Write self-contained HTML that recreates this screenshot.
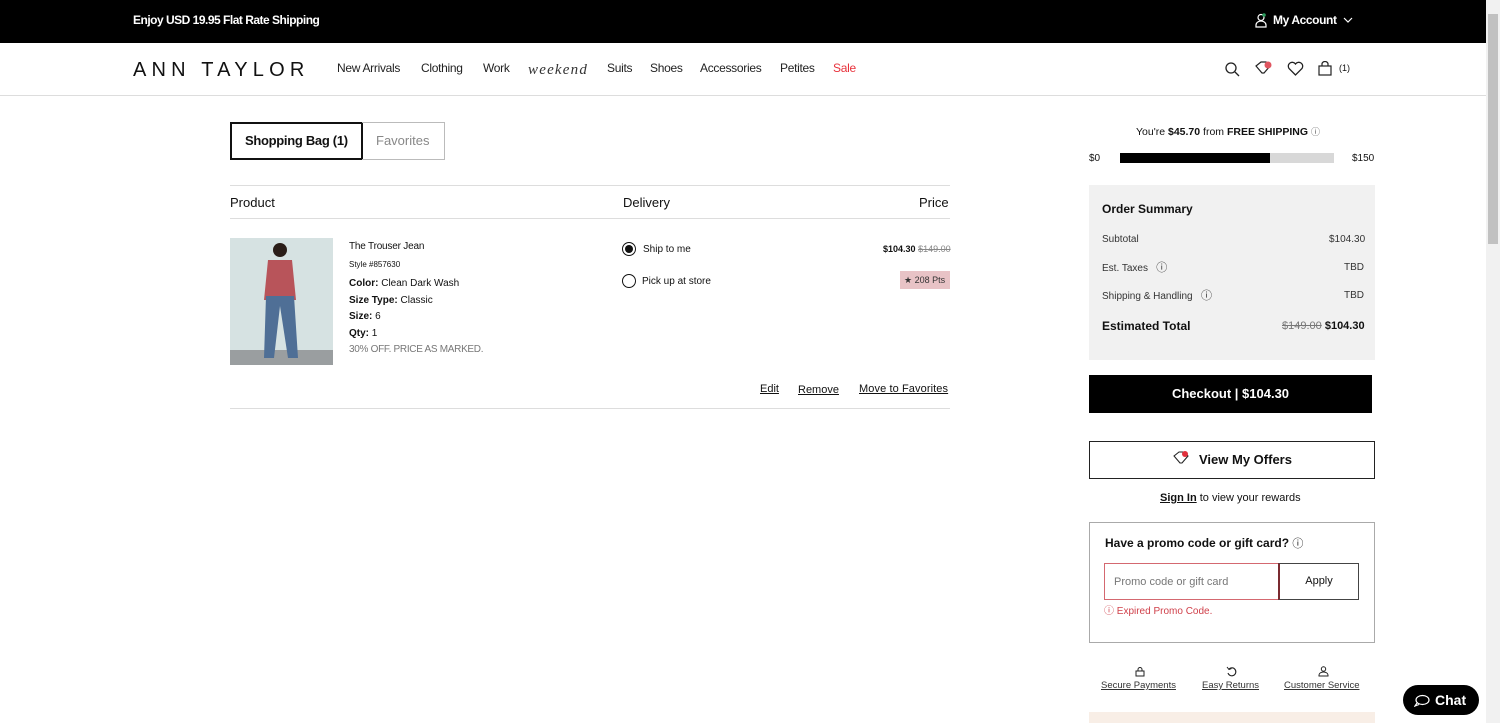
<!DOCTYPE html>
<html><head><meta charset="utf-8"><style>
*{margin:0;padding:0;box-sizing:border-box}
body{width:1500px;height:723px;overflow:hidden;background:#fff;font-family:"Liberation Sans",sans-serif;color:#111;position:relative}
.a{position:absolute;white-space:nowrap;line-height:1.15}
.top{left:0;top:0;width:1486px;height:43px;background:#000}
u{text-decoration:underline}
</style></head><body>
<div class="a top"></div>
<div class="a" style="left:133px;top:14px;color:#fff;font-size:12px;font-weight:bold;letter-spacing:-0.5px">Enjoy USD 19.95 Flat Rate Shipping</div>
<svg class="a" style="left:1255px;top:13px" width="13" height="15" viewBox="0 0 13 15"><circle cx="6" cy="4.5" r="3" fill="none" stroke="#fff" stroke-width="1.2"/><path d="M1 14v-2a5 4 0 0 1 10 0v2z" fill="none" stroke="#fff" stroke-width="1.2"/><circle cx="9" cy="2" r="1.8" fill="#2a9d5c"/></svg>
<div class="a" style="left:1273px;top:14px;color:#fff;font-size:12px;font-weight:bold;letter-spacing:-0.4px">My Account</div>
<svg class="a" style="left:1343px;top:17px" width="10" height="6"><path d="M1 1l4 4 4-4" fill="none" stroke="#fff" stroke-width="1.2"/></svg>
<div class="a" style="left:0;top:95px;width:1486px;height:1px;background:#ddd"></div>
<div class="a" style="left:133px;top:59px;font-size:20px;letter-spacing:5.2px;font-weight:normal">ANN TAYLOR</div>
<div class="a" style="left:337px;top:62px;font-size:12px;color:#222;letter-spacing:-0.3px">New Arrivals</div>
<div class="a" style="left:421px;top:62px;font-size:12px;color:#222;letter-spacing:-0.3px">Clothing</div>
<div class="a" style="left:483px;top:62px;font-size:12px;color:#222;letter-spacing:-0.3px">Work</div>
<div class="a" style="left:528px;top:62px;font-size:15px;font-family:'Liberation Serif',serif;font-style:italic;letter-spacing:1.2px;color:#333">weekend</div>
<div class="a" style="left:607px;top:62px;font-size:12px;color:#222;letter-spacing:-0.3px">Suits</div>
<div class="a" style="left:650px;top:62px;font-size:12px;color:#222;letter-spacing:-0.3px">Shoes</div>
<div class="a" style="left:700px;top:62px;font-size:12px;color:#222;letter-spacing:-0.3px">Accessories</div>
<div class="a" style="left:780px;top:62px;font-size:12px;color:#222;letter-spacing:-0.3px">Petites</div>
<div class="a" style="left:833px;top:62px;font-size:12px;color:#e8323c;letter-spacing:-0.3px">Sale</div>
<svg class="a" style="left:1225px;top:62px" width="15" height="15"><circle cx="6" cy="6" r="5" fill="none" stroke="#222" stroke-width="1.3"/><path d="M10 10l4 4" stroke="#222" stroke-width="1.3"/></svg>
<svg class="a" style="left:1254px;top:60px" width="20" height="17"><path d="M2 6l5-4h5l4 4-6 7-2 0z" fill="none" stroke="#222" stroke-width="1.2"/><circle cx="14" cy="5" r="3.5" fill="#e05560"/></svg>
<svg class="a" style="left:1287px;top:61px" width="17" height="15"><path d="M8.5 14L2 7.5A3.5 3.5 0 0 1 8.5 3a3.5 3.5 0 0 1 6.5 4.5z" fill="none" stroke="#222" stroke-width="1.3"/></svg>
<svg class="a" style="left:1318px;top:61px" width="14" height="15"><rect x="1" y="5" width="12" height="9" fill="none" stroke="#222" stroke-width="1.2"/><path d="M4 5V3a3 2.5 0 0 1 6 0v2" fill="none" stroke="#222" stroke-width="1.2"/></svg>
<div class="a" style="left:1339px;top:63px;font-size:9px">(1)</div>

<div class="a" style="left:230px;top:122px;width:133px;height:38px;border:2px solid #111"></div>
<div class="a" style="left:245px;top:134px;font-size:13px;font-weight:bold;color:#111;letter-spacing:-0.3px">Shopping Bag (1)</div>
<div class="a" style="left:362px;top:122px;width:83px;height:38px;border:1px solid #bbb;border-left:none"></div>
<div class="a" style="left:376px;top:134px;font-size:13px;color:#888">Favorites</div>
<div class="a" style="left:230px;top:185px;width:720px;height:1px;background:#ddd"></div>
<div class="a" style="left:230px;top:196px;font-size:13px">Product</div>
<div class="a" style="left:623px;top:196px;font-size:13px">Delivery</div>
<div class="a" style="left:919px;top:196px;font-size:13px">Price</div>
<div class="a" style="left:230px;top:218px;width:720px;height:1px;background:#ddd"></div>

<svg class="a" style="left:230px;top:238px" width="103" height="127"><rect width="103" height="127" fill="#d6e2e2"/><rect y="112" width="103" height="15" fill="#9a9ea0"/><circle cx="50" cy="12" r="7" fill="#2a1d18"/><path d="M38 22h24l4 40H34z" fill="#b8545a"/><path d="M36 58h28l4 62h-10l-8-52-6 52H34z" fill="#4f6f96"/></svg>
<div class="a" style="left:349px;top:241px;font-size:10px;letter-spacing:-0.2px">The Trouser Jean</div>
<div class="a" style="left:349px;top:260px;font-size:8px">Style #857630</div>
<div class="a" style="left:349px;top:278px;font-size:10px"><b>Color:</b> Clean Dark Wash</div>
<div class="a" style="left:349px;top:295px;font-size:10px"><b>Size Type:</b> Classic</div>
<div class="a" style="left:349px;top:311px;font-size:10px"><b>Size:</b> 6</div>
<div class="a" style="left:349px;top:328px;font-size:10px"><b>Qty:</b> 1</div>
<div class="a" style="left:349px;top:344px;font-size:10px;color:#777;letter-spacing:-0.3px">30% OFF. PRICE AS MARKED.</div>
<div class="a" style="left:622px;top:242px;width:14px;height:14px;border:1.3px solid #111;border-radius:50%"></div>
<div class="a" style="left:625px;top:245px;width:8px;height:8px;background:#111;border-radius:50%"></div>
<div class="a" style="left:643px;top:244px;font-size:10px">Ship to me</div>
<div class="a" style="left:622px;top:274px;width:14px;height:14px;border:1.2px solid #111;border-radius:50%"></div>
<div class="a" style="left:642px;top:276px;font-size:10px">Pick up at store</div>
<div class="a" style="left:883px;top:244px;font-size:9px"><b>$104.30</b> <s style="color:#888">$149.00</s></div>
<div class="a" style="left:900px;top:271px;width:50px;height:18px;background:#e8c3c6;font-size:9px;padding:4px 0 0 4px;color:#333">★ 208 Pts</div>
<div class="a" style="left:760px;top:383px;font-size:11px"><u>Edit</u></div>
<div class="a" style="left:798px;top:384px;font-size:11px"><u>Remove</u></div>
<div class="a" style="left:859px;top:383px;font-size:11px;letter-spacing:0.1px"><u>Move to Favorites</u></div>
<div class="a" style="left:230px;top:408px;width:720px;height:1px;background:#ddd"></div>

<div class="a" style="left:1136px;top:126px;font-size:10.5px">You're <b>$45.70</b> from <b>FREE SHIPPING</b> <span style="font-size:9px;color:#555">ⓘ</span></div>
<div class="a" style="left:1089px;top:153px;font-size:10px">$0</div>
<div class="a" style="left:1120px;top:153px;width:214px;height:10px;background:#d8d8d8"></div>
<div class="a" style="left:1120px;top:153px;width:150px;height:10px;background:#000"></div>
<div class="a" style="left:1352px;top:153px;font-size:10px">$150</div>
<div class="a" style="left:1089px;top:185px;width:286px;height:175px;background:#f1f1f1"></div>
<div class="a" style="left:1102px;top:203px;font-size:12px;font-weight:bold">Order Summary</div>
<div class="a" style="left:1102px;top:234px;font-size:10px;color:#333">Subtotal</div>
<div class="a" style="left:1329px;top:234px;font-size:10px;color:#333">$104.30</div>
<div class="a" style="left:1102px;top:262px;font-size:10px;color:#333">Est. Taxes &nbsp;&nbsp;<span style="font-size:11px">ⓘ</span></div>
<div class="a" style="left:1344px;top:262px;font-size:10px;color:#333">TBD</div>
<div class="a" style="left:1102px;top:290px;font-size:10px;color:#333">Shipping &amp; Handling &nbsp;&nbsp;<span style="font-size:11px">ⓘ</span></div>
<div class="a" style="left:1344px;top:290px;font-size:10px;color:#333">TBD</div>
<div class="a" style="left:1102px;top:320px;font-size:12px;font-weight:bold">Estimated Total</div>
<div class="a" style="left:1282px;top:320px;font-size:11px"><s style="color:#777">$149.00</s> <b>$104.30</b></div>
<div class="a" style="left:1089px;top:375px;width:283px;height:38px;background:#000;color:#fff;font-size:13px;font-weight:bold;text-align:center;line-height:38px">Checkout | $104.30</div>
<div class="a" style="left:1089px;top:441px;width:286px;height:38px;border:1px solid #222"></div>
<svg class="a" style="left:1173px;top:450px" width="18" height="16"><path d="M1 6l5-4h5l4 4-6 7-2 0z" fill="none" stroke="#222" stroke-width="1.1"/><circle cx="12" cy="4" r="3" fill="#e0303c"/></svg>
<div class="a" style="left:1199px;top:453px;font-size:13px;font-weight:bold">View My Offers</div>
<div class="a" style="left:1160px;top:492px;font-size:11px"><b><u>Sign In</u></b> to view your rewards</div>
<div class="a" style="left:1089px;top:522px;width:286px;height:121px;border:1px solid #aaa"></div>
<div class="a" style="left:1105px;top:537px;font-size:12px;font-weight:bold">Have a promo code or gift card? <span style="font-weight:normal;font-size:11px">ⓘ</span></div>
<div class="a" style="left:1104px;top:563px;width:176px;height:37px;border:1px solid #d46870"></div>
<div class="a" style="left:1114px;top:576px;font-size:11px;color:#777">Promo code or gift card</div>
<div class="a" style="left:1278px;top:563px;width:81px;height:37px;border:1px solid #444;border-left:2px solid #7a2a30;text-align:center;line-height:35px;font-size:11px">Apply</div>
<div class="a" style="left:1104px;top:606px;font-size:10px;color:#d0404a">ⓘ Expired Promo Code.</div>
<svg class="a" style="left:1135px;top:667px" width="10" height="10"><rect x="1" y="4" width="8" height="5" fill="none" stroke="#222"/><path d="M3 4V2.5a2 2 0 0 1 4 0V4" fill="none" stroke="#222"/></svg>
<div class="a" style="left:1101px;top:681px;font-size:9.5px;color:#333"><u>Secure Payments</u></div>
<svg class="a" style="left:1226px;top:666px" width="11" height="11"><path d="M3 3a4 4 0 1 1-1 4" fill="none" stroke="#222" stroke-width="1.1"/><path d="M1 1l2 2.5 2.5-1" fill="none" stroke="#222"/></svg>
<div class="a" style="left:1202px;top:681px;font-size:9.5px;color:#333"><u>Easy Returns</u></div>
<svg class="a" style="left:1318px;top:666px" width="11" height="11"><circle cx="5.5" cy="3" r="2.2" fill="none" stroke="#222"/><path d="M1 10v-1a4.5 3 0 0 1 9 0v1z" fill="none" stroke="#222"/></svg>
<div class="a" style="left:1284px;top:681px;font-size:9.5px;color:#333"><u>Customer Service</u></div>
<div class="a" style="left:1089px;top:712px;width:286px;height:11px;background:#f8eee6"></div>
<div class="a" style="left:1403px;top:685px;width:76px;height:30px;background:#000;border-radius:15px;color:#fff;font-size:14px;font-weight:bold;line-height:30px;padding-left:32px">Chat</div>
<svg class="a" style="left:1414px;top:694px" width="16" height="13"><ellipse cx="8.5" cy="6" rx="6.5" ry="4.5" fill="none" stroke="#fff" stroke-width="1.2"/><path d="M3 9l-2 3 4-1.5" fill="none" stroke="#fff" stroke-width="1.2"/></svg>
<div class="a" style="left:1486px;top:0;width:14px;height:723px;background:#f1f1f1"></div>
<div class="a" style="left:1488px;top:14px;width:10px;height:230px;background:#c1c1c1"></div>
</body></html>
